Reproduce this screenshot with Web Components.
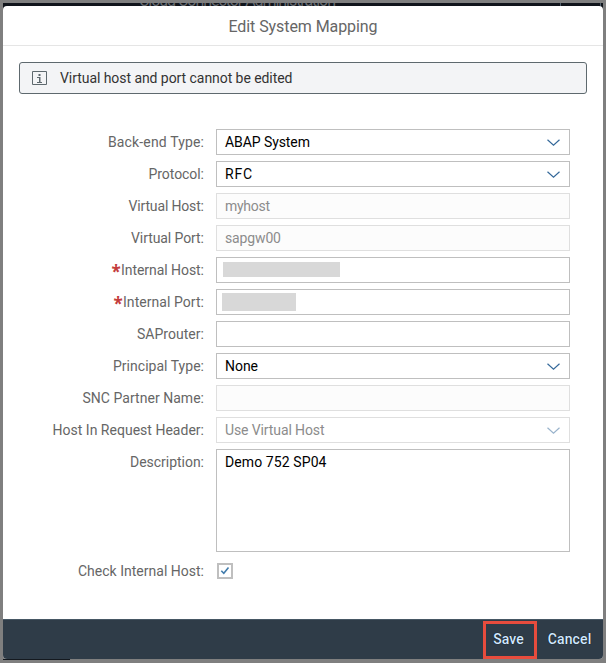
<!DOCTYPE html>
<html lang="en">
<head>
<meta charset="utf-8">
<title>Edit System Mapping</title>
<style>
html,body{margin:0;height:100%;overflow:hidden;background:#7f7f7f}
body{font:14px/16px Roboto,"Liberation Sans",sans-serif;color:#666}
</style>
</head>
<body>
<app-page>
  <mapping-dialog>
    <fit-text slot="title" width="149">Edit System Mapping</fit-text>
    <message-strip><fit-text width="232.5">Virtual host and port cannot be edited</fit-text></message-strip>
    <mapping-form>
      <form-row label="Back-end Type:" width="96"><field-box kind="select" value="ABAP System" width="85"></field-box></form-row>
      <form-row label="Protocol:" width="55.5"><field-box kind="select" value="RFC" width="27"></field-box></form-row>
      <form-row label="Virtual Host:" width="75.5"><field-box kind="input" disabled value="myhost" width="45"></field-box></form-row>
      <form-row label="Virtual Port:" width="73"><field-box kind="input" disabled value="sapgw00" width="56"></field-box></form-row>
      <form-row label="Internal Host:" width="83" required><field-box kind="input" style="--m:4px 0 0 6px;--w:117px;--h:15px"></field-box></form-row>
      <form-row label="Internal Port:" width="81" required><field-box kind="input" style="--m:3px 0 0 5px;--w:74px;--h:18px"></field-box></form-row>
      <form-row label="SAProuter:" width="67"><field-box kind="input"></field-box></form-row>
      <form-row label="Principal Type:" width="91"><field-box kind="select" value="None" width="33"></field-box></form-row>
      <form-row label="SNC Partner Name:" width="121.5"><field-box kind="input" disabled></field-box></form-row>
      <form-row label="Host In Request Header:" width="151.5"><field-box kind="select" disabled value="Use Virtual Host" width="99.5"></field-box></form-row>
      <form-row label="Description:" width="74"><field-box kind="area" value="Demo 752 SP04" width="101.5"></field-box></form-row>
      <form-row label="Check Internal Host:" width="126" style="--top:3px;margin-top:2px"><check-box></check-box></form-row>
    </mapping-form>
    <dialog-button slot="footer" marked><fit-text width="30.5">Save</fit-text></dialog-button>
    <dialog-button slot="footer"><fit-text width="43.5">Cancel</fit-text></dialog-button>
  </mapping-dialog>
</app-page>
<script>
const define = (name, html, setup) => {
  customElements.define(name, class extends HTMLElement {
    connectedCallback() {
      if (this.shadowRoot) return;
      const t = document.createElement('template');
      t.innerHTML = typeof html === 'function' ? html(this) : html;
      this.attachShadow({mode: 'open'}).append(t.content.cloneNode(true));
      if (setup) setup(this);
    }
  });
};

define('app-page', `<style>
:host{display:flex;flex-direction:column;box-sizing:border-box;width:606px;height:663px;padding:3px;background:#7f7f7f}
header{height:3px;flex:none;background:#10141b;position:relative}
.behind{position:absolute;left:0;top:0;width:600px;height:3px;overflow:hidden;color:#666a6f;font:16px/16px Roboto,sans-serif}
.behind fit-text{position:absolute;left:136px;top:-10px}
.behind i{position:absolute;top:0;width:1px;height:3px;background:#53606c}
main{flex:none;height:653px;background:linear-gradient(#10141b 20px,#7f7f7f 20px)}
footer{height:1px;width:67px;background:#14191f}
</style><header><div class="behind"><fit-text width="197">Cloud Connector Administration</fit-text><i style="left:557px"></i><i style="left:597px"></i></div></header><main><slot></slot></main><footer></footer>`);

define('mapping-dialog', `<style>
:host{display:flex;flex-direction:column;width:600px;height:653px;background:#fff;border-radius:4px;overflow:hidden}
h1{box-sizing:border-box;height:40px;margin:0;padding-top:11px;text-align:center;font-weight:400;font-size:16px;line-height:19px;color:#666;border-bottom:1px solid #e5e5e5}
section{flex:1;padding:16px 16px 0}
footer{box-sizing:border-box;height:40px;display:flex;justify-content:flex-end;gap:3px;padding:1px 4px 0 0;background:#2f3c48;border-top:1px solid #465764}
</style><h1><slot name="title"></slot></h1><section><slot></slot></section><footer><slot name="footer"></slot></footer>`);

define('message-strip', `<style>
:host{display:flex;align-items:center;box-sizing:border-box;height:32px;padding-left:12px;gap:13px;border:1px solid #5e696e;border-radius:3px;background:#f3f4f6;color:#333}
svg{display:block}
</style><svg width="15" height="15" viewBox="0 0 15 15" fill="none" stroke="#5e696e"><path d="M.5.5h14v13H.5z"/><path d="M5 6.5h2.5v4.5M5 11.5h5" stroke-width="1"/><path d="M7 6h1.5v5H7zM6.5 3h2v2h-2z" fill="#5e696e" stroke="none"/></svg><slot></slot>`);

define('mapping-form', `<style>:host{display:grid;gap:6px;padding-top:35px}</style><slot></slot>`);

define('form-row', el => `<style>
:host{display:grid;grid-template-columns:185px 354px;column-gap:12px;align-items:start}
label{display:flex;justify-content:flex-end;padding-top:var(--top,5px);color:#666}
b{font:700 20px/20px "Open Sans",sans-serif;width:8px;height:16px;color:#c43c3c;display:flex;justify-content:center}
b svg{margin-top:-1px}
b{font:700 17px/20px "Noto Sans",sans-serif;margin-right:1px}
</style><label>${el.hasAttribute('required') ? '<b>*</b>' : ''}<fit-text width="${el.getAttribute('width')}">${el.getAttribute('label')}</fit-text></label><slot></slot>`);

define('field-box', el => {
  const v = el.getAttribute('value');
  return `<style>
:host{display:flex;justify-content:space-between;box-sizing:border-box;height:26px;border:1px solid #bfbfbf;background:#fff;color:#000}
:host([disabled]){border-color:#dfdfdf;color:#8c8c8c}
:host([disabled][kind=input]){background:#fcfcfc}
:host([kind=area]){height:103px}
fit-text{padding:4px 0 0 8px}
svg{margin:9px 9px 0 0}
:host([disabled]) svg{opacity:.5}
.mask{width:var(--w,0);height:var(--h,0);margin:var(--m,0);background:#d8d8d8}
</style>${v ? `<fit-text width="${el.getAttribute('width')}">${v}</fit-text>` : '<div class="mask"></div>'}${el.getAttribute('kind') === 'select' ? '<svg width="13" height="8" viewBox="0 0 13 8" fill="none" stroke="#35699a" stroke-width="1.2"><path d="M.5.8 6.5 6.3 12.5.8"/></svg>' : ''}`;
});

define('check-box', `<style>:host{display:block;box-sizing:border-box;width:16px;height:16px;margin:3px 0 0 1px;border:2px solid #bfbfbf;background:#fff}svg{display:block}</style><svg width="12" height="12" viewBox="0 0 12 12" fill="none" stroke="#427cac" stroke-width="1.6"><path d="M2.3 5.7 4.8 8.3 9.5 2.6"/></svg>`);

define('dialog-button', `<style>
:host{display:flex;align-items:center;justify-content:center;box-sizing:border-box;width:59px;height:38px;padding-bottom:2px;color:#d1e8ff;font-weight:500;text-shadow:0 0 1px #000}
:host([marked]){width:54px;padding-bottom:0;border:3px solid #e84c3d}
:host([marked]) ::slotted(*){margin:-2px 3px 0 0}
</style><slot></slot>`);

/* Text set to a given advance width by adjusting its tracking.
   Defined last, so that inherited fonts are in place when it measures. */
define('fit-text', `<style>:host{display:inline-block;white-space:nowrap}span{display:inline-block}</style><span><slot></slot></span>`, el => {
  const span = el.shadowRoot.querySelector('span');
  const want = parseFloat(el.getAttribute('width'));
  const n = el.textContent.length;
  if (want) {
    const gap = (want - span.getBoundingClientRect().width) / (n - 1);
    span.style.letterSpacing = gap + 'px';
    span.style.marginRight = -gap + 'px';
  }
});
</script>
</body>
</html>
